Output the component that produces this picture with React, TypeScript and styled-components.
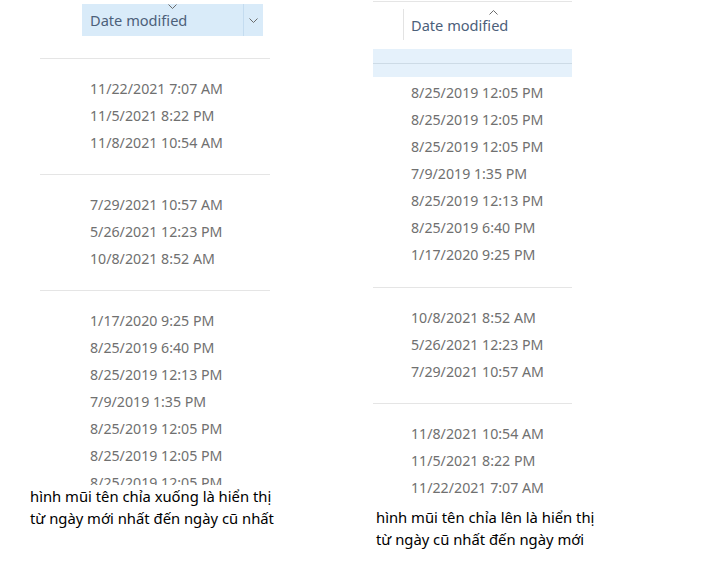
import React from 'react';
import styled, { createGlobalStyle } from 'styled-components';

const GlobalStyle = createGlobalStyle`
  html, body {
    margin: 0;
    padding: 0;
    background: #ffffff;
  }
  body {
    font-family: 'Noto Sans', 'Open Sans', sans-serif;
  }
`;

const Page = styled.div`
  display: flex;
  align-items: flex-start;
  width: 712px;
  height: 584px;
  overflow: hidden;
  background: #ffffff;
`;

const LeftColumn = styled.div`
  margin-left: 30px;
  width: 250px;
  display: flex;
  flex-direction: column;
`;

const RightColumn = styled.div`
  margin-left: 93px;
  width: 250px;
  display: flex;
  flex-direction: column;
`;

const ListArea = styled.div<{ $inset: number; $width: number }>`
  margin-left: ${(p) => p.$inset}px;
  width: ${(p) => p.$width}px;
  display: flex;
  flex-direction: column;
`;

const HeaderDown = styled.div`
  height: 58px;
  display: flex;
  align-items: flex-start;
  padding-left: 42px;
`;

const HeaderCell = styled.div`
  position: relative;
  margin-top: 4px;
  width: 181px;
  height: 32px;
  background: #d9ebf9;
  display: flex;
  align-items: center;
`;

const HeaderLabel = styled.span`
  flex: 1;
  padding-left: 8px;
  font-size: 14.6px;
  color: #4c607a;
  line-height: 32px;
`;

const DropButton = styled.div`
  width: 19px;
  height: 32px;
  border-left: 1px solid #c4dcf0;
  display: flex;
  align-items: center;
  justify-content: center;
`;

const SortMark = styled.div<{ $left: number; $top: number }>`
  position: absolute;
  left: ${(p) => p.$left}px;
  top: ${(p) => p.$top}px;
  display: flex;
`;

const HeaderUp = styled.div`
  position: relative;
  margin-top: 1px;
  border-top: 1px solid #e5e5e5;
  height: 47px;
  display: flex;
  align-items: flex-start;
`;

const ColumnDivider = styled.div`
  margin-top: 7px;
  margin-left: 30px;
  width: 1px;
  height: 31px;
  background: #e3e3e3;
`;

const UpLabel = styled.span`
  margin-left: 7px;
  margin-top: 13px;
  font-size: 14.6px;
  color: #4c607a;
  line-height: 20px;
`;

const SelectedBand = styled.div`
  height: 28px;
  display: flex;
  flex-direction: column;
  background: #e5f1fb;
`;

const BandLine = styled.div`
  margin-top: 14px;
  height: 1px;
  background: #cddbe6;
`;

const Group = styled.div<{ $top: number; $bottom: number; $line: boolean }>`
  border-top: ${(p) => (p.$line ? '1px solid #e5e5e5' : 'none')};
  padding-top: ${(p) => p.$top}px;
  padding-bottom: ${(p) => p.$bottom}px;
  display: flex;
  flex-direction: column;
`;

const DateRow = styled.div<{ $indent: number }>`
  height: 27px;
  line-height: 27px;
  padding-left: ${(p) => p.$indent}px;
  font-size: 14.2px;
  color: #707070;
  white-space: nowrap;
`;

const Caption = styled.div<{ $pull: number; $shift: number }>`
  position: relative;
  margin-top: ${(p) => p.$pull}px;
  margin-left: ${(p) => p.$shift}px;
  background: #ffffff;
  font-size: 14.8px;
  line-height: 22px;
  color: #000000;
  white-space: nowrap;
`;

function Chevron({ up }: { up?: boolean }) {
  return (
    <svg width="9" height="5" viewBox="0 0 9 5">
      <path
        d={up ? 'M0.5 4.5 L4.5 0.5 L8.5 4.5' : 'M0.5 0.5 L4.5 4.5 L8.5 0.5'}
        fill="none"
        stroke="#6b6b6b"
        strokeWidth="1"
      />
    </svg>
  );
}

const newestFirst = [
  ['11/22/2021 7:07 AM', '11/5/2021 8:22 PM', '11/8/2021 10:54 AM'],
  ['7/29/2021 10:57 AM', '5/26/2021 12:23 PM', '10/8/2021 8:52 AM'],
  [
    '1/17/2020 9:25 PM',
    '8/25/2019 6:40 PM',
    '8/25/2019 12:13 PM',
    '7/9/2019 1:35 PM',
    '8/25/2019 12:05 PM',
    '8/25/2019 12:05 PM',
    '8/25/2019 12:05 PM',
  ],
];

const oldestFirst = [
  [
    '8/25/2019 12:05 PM',
    '8/25/2019 12:05 PM',
    '8/25/2019 12:05 PM',
    '7/9/2019 1:35 PM',
    '8/25/2019 12:13 PM',
    '8/25/2019 6:40 PM',
    '1/17/2020 9:25 PM',
  ],
  ['10/8/2021 8:52 AM', '5/26/2021 12:23 PM', '7/29/2021 10:57 AM'],
  ['11/8/2021 10:54 AM', '11/5/2021 8:22 PM', '11/22/2021 7:07 AM'],
];

export default function App() {
  return (
    <>
      <GlobalStyle />
      <Page>
        <LeftColumn>
          <ListArea $inset={10} $width={230}>
            <HeaderDown>
              <HeaderCell>
                <SortMark $left={86} $top={0}>
                  <Chevron />
                </SortMark>
                <HeaderLabel>Date modified</HeaderLabel>
                <DropButton>
                  <Chevron />
                </DropButton>
              </HeaderCell>
            </HeaderDown>
            {newestFirst.map((rows, i) => (
              <Group key={i} $line $top={16} $bottom={18}>
                {rows.map((d, j) => (
                  <DateRow key={j} $indent={50}>
                    {d}
                  </DateRow>
                ))}
              </Group>
            ))}
          </ListArea>
          <Caption $pull={-29} $shift={0}>
            hình mũi tên chỉa xuống là hiển thị
            <br />
            từ ngày mới nhất đến ngày cũ nhất
          </Caption>
        </LeftColumn>
        <RightColumn>
          <ListArea $inset={0} $width={199}>
            <HeaderUp>
              <SortMark $left={116} $top={8}>
                <Chevron up />
              </SortMark>
              <ColumnDivider />
              <UpLabel>Date modified</UpLabel>
            </HeaderUp>
            <SelectedBand>
              <BandLine />
            </SelectedBand>
            <Group $line={false} $top={2} $bottom={19}>
              {oldestFirst[0].map((d, j) => (
                <DateRow key={j} $indent={38}>
                  {d}
                </DateRow>
              ))}
            </Group>
            {oldestFirst.slice(1).map((rows, i) => (
              <Group key={i} $line $top={16} $bottom={18}>
                {rows.map((d, j) => (
                  <DateRow key={j} $indent={38}>
                    {d}
                  </DateRow>
                ))}
              </Group>
            ))}
          </ListArea>
          <Caption $pull={-13} $shift={3}>
            hình mũi tên chỉa lên là hiển thị
            <br />
            từ ngày cũ nhất đến ngày mới
          </Caption>
        </RightColumn>
      </Page>
    </>
  );
}
